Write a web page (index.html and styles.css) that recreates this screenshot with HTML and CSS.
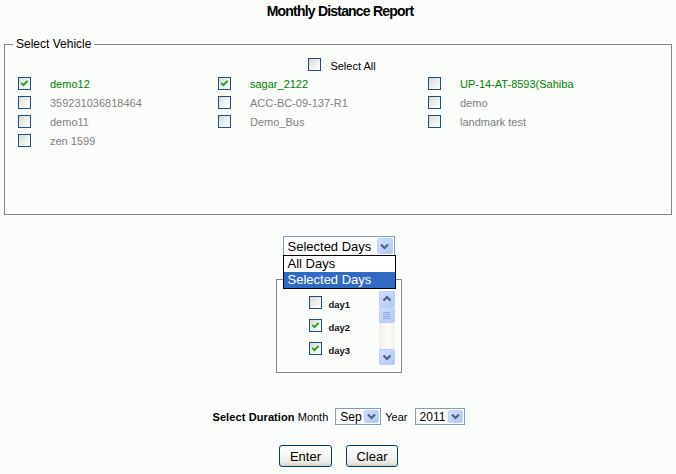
FILE: index.html
```html
<!DOCTYPE html>
<html>
<head>
<meta charset="utf-8">
<title>Monthly Distance Report</title>
<link rel="stylesheet" href="styles.css">
</head>
<body>
<h1 class="title">Monthly Distance Report</h1>

<fieldset class="vehicles">
  <legend class="legend">Select Vehicle</legend>
  <div class="select-all">
    <span class="cb"></span><span class="all-label">Select All</span>
  </div>
  <div class="vgrid">
    <span class="cb"><svg width="11" height="11" viewBox="0 0 11 11"><polyline points="2.3,4.8 4.4,7.2 8.6,2.8" fill="none" stroke="#21a121" stroke-width="1.9"/></svg></span><span class="vlabel on">demo12</span>
    <span class="cb"><svg width="11" height="11" viewBox="0 0 11 11"><polyline points="2.3,4.8 4.4,7.2 8.6,2.8" fill="none" stroke="#21a121" stroke-width="1.9"/></svg></span><span class="vlabel on">sagar_2122</span>
    <span class="cb"></span><span class="vlabel on">UP-14-AT-8593(Sahiba</span>

    <span class="cb"></span><span class="vlabel">359231036818464</span>
    <span class="cb"></span><span class="vlabel">ACC-BC-09-137-R1</span>
    <span class="cb"></span><span class="vlabel">demo</span>

    <span class="cb"></span><span class="vlabel">demo11</span>
    <span class="cb"></span><span class="vlabel">Demo_Bus</span>
    <span class="cb"></span><span class="vlabel">landmark test</span>

    <span class="cb"></span><span class="vlabel">zen 1599</span>
  </div>
</fieldset>

<div class="days-area">
  <div class="combo combo-days">
    <span class="combo-text">Selected Days</span>
    <span class="combo-btn"><svg width="13" height="14" viewBox="0 0 13 14"><polyline points="3,5.5 6.5,9 10,5.5" fill="none" stroke="#4d6185" stroke-width="2.2"/></svg></span>
    <ul class="combo-list">
      <li class="opt">All Days</li>
      <li class="opt hl">Selected Days</li>
    </ul>
  </div>

  <div class="daybox">
    <div class="daylist">
      <div class="dayrows">
        <div class="dayrow"><span class="cb"></span><span class="daylabel">day1</span></div>
        <div class="dayrow"><span class="cb"><svg width="11" height="11" viewBox="0 0 11 11"><polyline points="2.3,4.8 4.4,7.2 8.6,2.8" fill="none" stroke="#21a121" stroke-width="1.9"/></svg></span><span class="daylabel">day2</span></div>
        <div class="dayrow"><span class="cb"><svg width="11" height="11" viewBox="0 0 11 11"><polyline points="2.3,4.8 4.4,7.2 8.6,2.8" fill="none" stroke="#21a121" stroke-width="1.9"/></svg></span><span class="daylabel">day3</span></div>
      </div>
      <div class="scrollbar">
        <span class="sb-btn"><svg width="14" height="14" viewBox="0 0 14 14"><polyline points="3.5,8.5 7,5 10.5,8.5" fill="none" stroke="#4d6185" stroke-width="2.2"/></svg></span>
        <span class="sb-thumb"><span class="grip"></span><span class="grip"></span><span class="grip"></span><span class="grip"></span></span>
        <span class="sb-track"></span>
        <span class="sb-btn"><svg width="14" height="14" viewBox="0 0 14 14"><polyline points="3.5,5.5 7,9 10.5,5.5" fill="none" stroke="#4d6185" stroke-width="2.2"/></svg></span>
      </div>
    </div>
  </div>
</div>

<div class="duration">
  <span class="dur-title">Select Duration</span>
  <span class="dur-text">&nbsp;Month</span>
  <div class="combo combo-small combo-month">
    <span class="combo-text">Sep</span>
    <span class="combo-btn"><svg width="13" height="11" viewBox="0 0 13 11"><polyline points="3,3.5 6.5,7 10,3.5" fill="none" stroke="#4d6185" stroke-width="2.2"/></svg></span>
  </div>
  <span class="dur-text year">Year</span>
  <div class="combo combo-small combo-year">
    <span class="combo-text">2011</span>
    <span class="combo-btn"><svg width="13" height="11" viewBox="0 0 13 11"><polyline points="3,3.5 6.5,7 10,3.5" fill="none" stroke="#4d6185" stroke-width="2.2"/></svg></span>
  </div>
</div>

<div class="buttons">
  <button class="btn btn-enter" type="button">Enter</button>
  <button class="btn btn-clear" type="button">Clear</button>
</div>
</body>
</html>
```

FILE: styles.css
```css
html, body {
  margin: 0;
  padding: 0;
  background: #fbfdfb;
}
body {
  font-family: Arial, "Liberation Sans", sans-serif;
  color: #000;
}

.title {
  margin: 0;
  height: 22px;
  line-height: 22px;
  text-align: center;
  font-size: 14px;
  font-weight: bold;
  letter-spacing: -0.8px;
  padding-left: 4px;
}

/* vehicle fieldset */
.vehicles {
  margin: 15px 4px 0;
  padding: 0 0 64px 0;
  border: 1px solid #878783;
  min-width: 0;
}
.legend {
  margin-left: 8px;
  padding: 0 3px;
  font-size: 12px;
  line-height: 14px;
}
.select-all {
  display: flex;
  justify-content: center;
  align-items: center;
  height: 19px;
  margin-top: 4px;
  padding-left: 8px;
  font-size: 11px;
}
.all-label {
  margin-left: 9px;
  padding-top: 3px;
}

.cb {
  display: block;
  width: 13px;
  height: 13px;
  box-sizing: border-box;
  border: 1px solid #1c5180;
  background: linear-gradient(135deg, #d9d9d3 0%, #ecece8 45%, #fdfdfb 100%);
  flex: none;
}
.cb svg {
  display: block;
}

.vgrid {
  display: grid;
  grid-template-columns: 32px 168px 32px 178px 32px 1fr;
  grid-auto-rows: 19px;
  align-items: center;
  padding-left: 13px;
  font-size: 11px;
}
.vlabel {
  color: #808080;
  white-space: nowrap;
}
.vlabel.on {
  color: #008000;
}

/* days */
.days-area {
  display: flex;
  flex-direction: column;
  align-items: center;
  margin-top: 21px;
  padding-left: 1px;
}

.combo {
  position: relative;
  display: flex;
  align-items: stretch;
  box-sizing: border-box;
  border: 1px solid #7f9db9;
  background: #fff;
}
.combo-text {
  flex: 1;
  display: flex;
  align-items: center;
  padding-left: 4px;
  font-size: 13px;
  white-space: nowrap;
  overflow: hidden;
}
.combo-btn {
  display: flex;
  align-items: center;
  justify-content: center;
  margin: 1px;
  width: 15px;
  flex: none;
  box-sizing: border-box;
  border: 1px solid #bcd0f7;
  border-radius: 2px;
  background: linear-gradient(135deg, #d3dffd 0%, #c0d2fa 55%, #b1c6f4 100%);
  overflow: hidden;
}
.combo-btn svg {
  display: block;
  flex: none;
}
.combo-days {
  width: 112px;
  height: 20px;
}
.combo-days .combo-btn {
  width: 16px;
}
.combo-list {
  position: absolute;
  left: -1px;
  top: 18px;
  width: 113px;
  margin: 0;
  padding: 0;
  list-style: none;
  box-sizing: border-box;
  border: 1px solid #000;
  background: #fff;
  z-index: 2;
}
.opt {
  height: 16px;
  line-height: 16px;
  padding-left: 4px;
  font-size: 13px;
  white-space: nowrap;
}
.opt.hl {
  background: #316ac5;
  color: #fff;
}

.daybox {
  margin-top: 23px;
  width: 126px;
  height: 94px;
  box-sizing: border-box;
  border: 1px solid #878783;
  padding: 11px 6px 7px 14px;
}
.daylist {
  display: flex;
  height: 74px;
}
.dayrows {
  flex: 1;
}
.dayrow {
  display: flex;
  align-items: center;
  height: 23px;
  padding-left: 18px;
}
.daylabel {
  margin-left: 7px;
  padding-top: 4px;
  font-size: 9.5px;
  font-weight: bold;
  color: #111;
}

.scrollbar {
  width: 16px;
  display: flex;
  flex-direction: column;
  background: linear-gradient(90deg, #f1efe8 0%, #fbfbf7 60%, #f3f1ea 100%);
}
.sb-btn,
.sb-thumb {
  display: flex;
  align-items: center;
  justify-content: center;
  height: 16px;
  box-sizing: border-box;
  border: 1px solid #b9cdf6;
  border-radius: 2px;
  background: linear-gradient(135deg, #d3dffd 0%, #c1d3fb 55%, #b4c8f5 100%);
  flex: none;
}
.sb-btn svg {
  display: block;
}
.sb-thumb {
  flex-direction: column;
  gap: 1px;
}
.grip {
  display: block;
  width: 7px;
  height: 1px;
  background: #8ca5e4;
}
.sb-track {
  flex: 1;
}

/* duration */
.duration {
  display: flex;
  justify-content: center;
  align-items: center;
  margin-top: 35px;
  height: 17px;
  font-size: 11px;
  padding-left: 1px;
}
.dur-title {
  font-weight: bold;
  letter-spacing: 0.1px;
}
.dur-text {
  font-size: 11px;
}
.year {
  margin-left: 4px;
}
.combo-small {
  height: 17px;
  margin-left: 7px;
}
.combo-small .combo-text {
  font-size: 12px;
  padding-left: 4px;
}
.combo-month {
  width: 46px;
}
.combo-year {
  width: 50px;
}

/* buttons */
.buttons {
  display: flex;
  justify-content: center;
  gap: 14px;
  margin-top: 20px;
  padding-left: 1px;
}
.btn {
  height: 22px;
  box-sizing: border-box;
  padding: 0;
  border: 1px solid #003c74;
  border-radius: 3px;
  background: linear-gradient(180deg, #ffffff 0%, #f7f7f4 40%, #ecebe5 80%, #d6d0c5 100%);
  font-family: Arial, "Liberation Sans", sans-serif;
  font-size: 13px;
  color: #000;
}
.btn-enter {
  width: 53px;
}
.btn-clear {
  width: 52px;
}
```
